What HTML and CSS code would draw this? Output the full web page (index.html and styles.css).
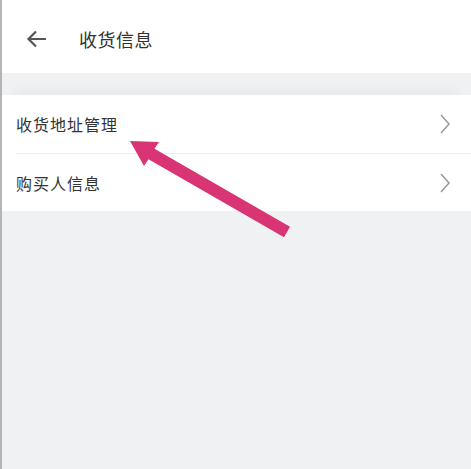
FILE: index.html
```html
<!DOCTYPE html>
<html lang="zh-CN">
<head>
    <meta charset="UTF-8">
    <meta name="viewport" content="width=device-width, initial-scale=1.0">
    <title>收货信息</title>
    <link rel="stylesheet" href="styles.css">
</head>
<body>
    <div class="page">
        <header class="top-bar">
            <button type="button" class="back-btn" aria-label="返回">
                <svg width="24" height="24" viewBox="0 0 24 24">
                    <path d="M21 12H4M11 4.5l-7.5 7.5 7.5 7.5" fill="none" stroke="#555" stroke-width="2.2"/>
                </svg>
            </button>
            <h1 class="title">收货信息</h1>
        </header>

        <ul class="menu-list">
            <li class="menu-item">
                <span>收货地址管理</span>
                <svg class="chevron" width="12" height="22" viewBox="0 0 12 22">
                    <path d="M2 2l8 9-8 9" fill="none" stroke="#999" stroke-width="1.5"/>
                </svg>
            </li>
            <li class="menu-item">
                <span>购买人信息</span>
                <svg class="chevron" width="12" height="22" viewBox="0 0 12 22">
                    <path d="M2 2l8 9-8 9" fill="none" stroke="#999" stroke-width="1.5"/>
                </svg>
            </li>
        </ul>

        <!-- annotation arrow over the list -->
        <svg class="pointer" width="471" height="469" viewBox="0 0 471 469">
            <polygon points="130,141 159,142 154.5,148.8 290,226.8 284,237.2 148.5,159.2 144,166" fill="#d93473"/>
        </svg>
    </div>
</body>
</html>
```

FILE: styles.css
```css
* {
    margin: 0;
    padding: 0;
    box-sizing: border-box;
}

body {
    font-family: Roboto, "Noto Sans CJK SC", sans-serif;
    background: #f0f1f3;
    color: #333;
}

.page {
    position: relative;
    min-height: 469px;
    border-left: 2px solid #b5b5b5;
    overflow: hidden;
}

.top-bar {
    height: 73px;
    background: white;
    display: flex;
    align-items: center;
    padding-left: 23px;
    padding-top: 5px;
}

.back-btn {
    background: none;
    border: none;
    width: 24px;
    height: 24px;
    display: flex;
}

.title {
    font-size: 18px;
    font-weight: 400;
    letter-spacing: 0.5px;
    margin-left: 30px;
    color: #333;
}

.menu-list {
    list-style: none;
    margin-top: 22px;
    background: white;
    box-shadow: 0 -18px 8px -12px rgba(0, 0, 0, 0.03);
}

.menu-item {
    height: 58px;
    display: flex;
    align-items: center;
    justify-content: space-between;
    margin-left: 14px;
    padding-right: 20px;
    font-size: 16px;
    letter-spacing: 1px;
    color: #333;
}

.menu-item + .menu-item {
    border-top: 1px solid #eee;
}

.pointer {
    position: absolute;
    left: -2px;
    top: 0;
}
```
